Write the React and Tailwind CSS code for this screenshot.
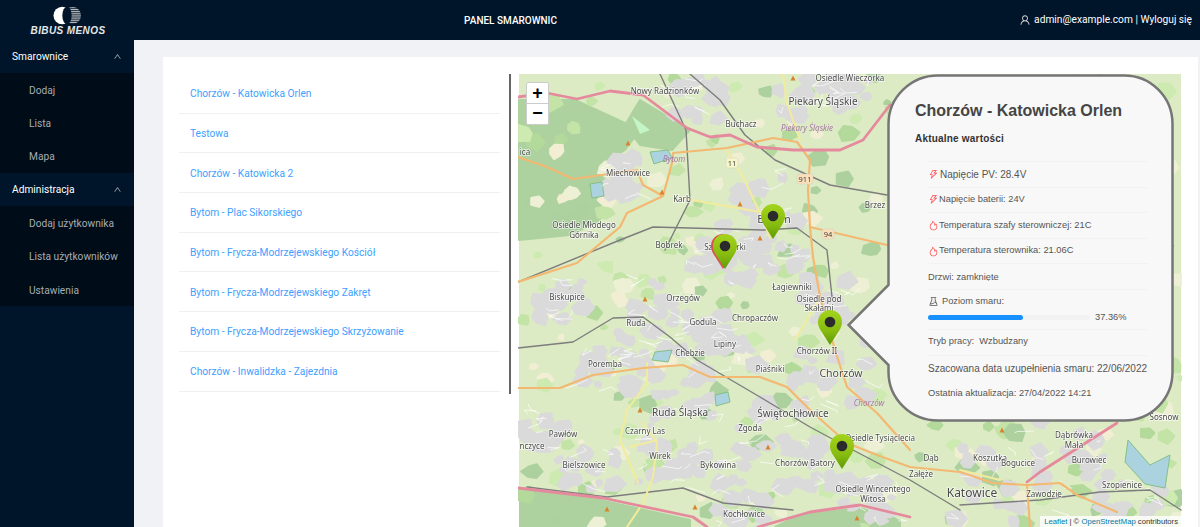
import React from "react";
import {
  AiOutlineUser,
  AiOutlineUp,
  AiOutlineThunderbolt,
  AiOutlineFire,
  AiOutlineExperiment,
} from "react-icons/ai";

const menu = [
  { title: "Smarownice", items: ["Dodaj", "Lista", "Mapa"] },
  { title: "Administracja", items: ["Dodaj użytkownika", "Lista użytkowników", "Ustawienia"] },
];

const stations = [
  "Chorzów - Katowicka Orlen",
  "Testowa",
  "Chorzów - Katowicka 2",
  "Bytom - Plac Sikorskiego",
  "Bytom - Frycza-Modrzejewskiego Kościół",
  "Bytom - Frycza-Modrzejewskiego Zakręt",
  "Bytom - Frycza-Modrzejewskiego Skrzyżowanie",
  "Chorzów - Inwalidzka - Zajezdnia",
];

// deterministic scatter so the map looks the same on every load
let seed = 4711;
const rnd = () => {
  seed = (seed * 16807) % 2147483647;
  return seed / 2147483647;
};

const blob = (cx, cy, r) => {
  const n = 5 + Math.floor(rnd() * 3);
  const pts = [];
  for (let i = 0; i < n; i++) {
    const a = (i / n) * Math.PI * 2;
    const d = r * (0.6 + rnd() * 0.5);
    pts.push(`${(cx + Math.cos(a) * d).toFixed(1)},${(cy + Math.sin(a) * d * 0.8).toFixed(1)}`);
  }
  return pts.join(" ");
};

const towns = [
  [760, 205, 34], [830, 375, 36], [680, 405, 36], [775, 425, 34], [1000, 485, 44], [815, 100, 34],
  [628, 180, 24], [585, 465, 30], [725, 350, 30], [700, 335, 24], [605, 370, 24], [725, 262, 26],
  [660, 300, 26], [560, 300, 22], [660, 460, 24], [720, 470, 28], [815, 470, 30], [870, 500, 24],
  [1070, 450, 34], [1130, 500, 30], [740, 515, 22], [545, 430, 20], [830, 300, 26], [700, 100, 22],
  [850, 90, 20], [780, 250, 24], [640, 350, 24],
];

const greenBlobs = [];
for (let i = 0; i < 300; i++) {
  greenBlobs.push({
    points: blob(519 + rnd() * 662, 74 + rnd() * 453, 3 + rnd() * 10),
    fill: ["#c3e4a6", "#b3d99b", "#cdebb0", "#eef0d5", "#add19e", "#f1eed3"][Math.floor(rnd() * 6)],
  });
}

const grayBlobs = [];
towns.forEach(([x, y, s]) => {
  for (let i = 0; i < 15; i++) {
    grayBlobs.push(blob(x + (rnd() - 0.5) * s * 2.2, y + (rnd() - 0.5) * s * 1.8, 4 + rnd() * 9));
  }
});

const streets = [];
towns.forEach(([x, y, s]) => {
  for (let i = 0; i < 6; i++) {
    const x1 = x + (rnd() - 0.5) * s * 2.4;
    const y1 = y + (rnd() - 0.5) * s * 2;
    const x2 = x1 + (rnd() - 0.5) * 34;
    const y2 = y1 + (rnd() - 0.5) * 16;
    streets.push(`${x1.toFixed(1)},${y1.toFixed(1)} ${x2.toFixed(1)},${y2.toFixed(1)} ${(x2 + (rnd() - 0.5) * 26).toFixed(1)},${(y2 + (rnd() - 0.5) * 10).toFixed(1)}`);
  }
});

const forests = [
  "519,100 575,100 640,130 625,150 600,165 590,185 610,190 600,220 570,235 519,240",
  "640,100 690,130 672,150 640,145 625,125",
  "520,490 600,500 690,520 690,527 520,527",
  "775,527 800,515 860,508 900,520 900,527",
];

const water = [
  "650,152 668,150 672,158 654,164",
  "590,184 602,182 604,196 592,198",
  "1128,440 1150,465 1170,455 1165,488 1145,484 1125,462",
  "715,395 728,392 730,402 716,406",
  "655,352 672,350 668,362 652,360",
];

const motorways = [
  "518,97 547,93 577,99 610,91 643,95 687,128 710,137 730,135 757,147 793,150 840,150 863,140 890,105",
  "518,488 603,498 693,517 707,527",
  "758,527 810,512 860,505 910,517",
  "1117,423 1040,472 1027,482",
];

const mainRoads = [
  "518,388 560,388 593,375 643,368 683,365 710,377 760,377 787,387 810,410 847,443 877,455 910,467 960,472 993,483 1027,485 1060,483 1077,495 1117,512",
  "518,282 577,263 620,227 627,213 663,196 643,185 637,170 573,179 547,167 518,157",
  "663,196 672,163 673,153 727,148 773,138 797,142 810,160 808,190 810,227 813,257 820,297 835,350 847,387 877,413 910,450",
  "810,227 887,245",
  "1027,485 1030,527",
];

const yellowRoads = [
  "727,150 743,177 760,213 770,238",
  "680,198 760,212",
  "783,74 787,103 800,140",
  "647,363 647,383 627,410 620,440 638,483",
  "643,423 657,443 653,477 643,503 627,527",
  "630,447 657,440",
  "820,297 795,340",
  "960,470 1000,480",
];

const rails = [
  "518,282 620,240 653,227 763,230 797,228 827,250 832,297",
  "518,348 573,342 613,318 643,317 670,337 697,360 760,397 810,427 853,450 910,480 960,510",
  "527,487 607,497 683,488 723,503 793,510",
  "960,505 1040,500 1100,492 1150,490 1181,510",
  "690,74 720,100 745,135 775,160 830,185 887,195",
  "660,74 686,130 690,200 665,250",
];

const labels = [
  ["Osiedle Wieczorka", 850, 81, 8],
  ["Nowy Radzionków", 665, 94, 8],
  ["Piekary Śląskie", 823, 105, 10],
  ["Buchacz", 741, 127, 8],
  ["Miechowice", 628, 176, 8],
  ["Karb", 682, 202, 8],
  ["Brzez", 875, 208, 8],
  ["Bytom", 774, 223, 11],
  ["Osiedle Młodego", 584, 228, 8],
  ["Górnika", 584, 238, 8],
  ["Bobrek", 669, 248, 8],
  ["Szombierki", 725, 250, 8],
  ["Łagiewniki", 792, 290, 8],
  ["Biskupice", 567, 300, 8],
  ["Orzegów", 683, 301, 8],
  ["Osiedle pod", 819, 302, 8],
  ["Skałami", 819, 311, 8],
  ["Chropaczów", 755, 321, 8],
  ["Ruda", 636, 326, 8],
  ["Godula", 703, 325, 8],
  ["Lipiny", 725, 347, 8],
  ["Chebzie", 690, 356, 8],
  ["Chorzów II", 817, 354, 8],
  ["Poremba", 605, 367, 8],
  ["Piaśniki", 770, 372, 8],
  ["Chorzów", 841, 377, 10.5],
  ["Ruda Śląska", 680, 416, 10],
  ["Świętochłowice", 793, 417, 10],
  ["Czarny Las", 645, 434, 8],
  ["Zgoda", 750, 431, 8],
  ["Pawłów", 563, 437, 8],
  ["Wirek", 660, 459, 8],
  ["Bielszowice", 584, 468, 8],
  ["Bykowina", 718, 468, 8],
  ["Chorzów Batory", 805, 466, 8],
  ["Osiedle Tysiąclecia", 880, 441, 8],
  ["Osiedle Wincentego", 873, 492, 8],
  ["Witosa", 873, 502, 8],
  ["Kochłowice", 744, 517, 8],
  ["Katowice", 972, 497, 12],
  ["Dąb", 931, 461, 8],
  ["Załęże", 921, 477, 8],
  ["Koszutka", 990, 461, 8],
  ["Bogucice", 1018, 466, 8],
  ["Dąbrówka", 1074, 438, 8],
  ["Mała", 1074, 448, 8],
  ["Burowiec", 1089, 463, 8],
  ["Szopienice", 1122, 488, 8],
  ["Zawodzie", 1044, 497, 8],
  ["Sosnow", 1164, 420, 8],
  ["nczyce", 532, 449, 8],
  ["ica", 525, 155, 8],
];

const districts = [
  ["Piekary Śląskie", 807, 131],
  ["Bytom", 674, 162],
  ["Chorzów", 869, 406],
];

const triangles = [
  [793, 78], [628, 143], [662, 192], [740, 204], [760, 238], [645, 299], [640, 410], [607, 509],
  [695, 507], [768, 447], [857, 518], [1002, 430], [1150, 395],
];

function Polylines({ items, stroke, width, dash, opacity }) {
  return items.map((points) => (
    <polyline
      key={points}
      points={points}
      fill="none"
      stroke={stroke}
      strokeWidth={width}
      strokeDasharray={dash}
      strokeOpacity={opacity}
      strokeLinejoin="round"
      strokeLinecap="round"
    />
  ));
}

function Patch({ points, fill }) {
  return <polygon points={points} fill={fill} stroke={fill} strokeWidth="2" strokeLinejoin="round" />;
}

function Pin({ x, top, color = "url(#pinGreen)" }) {
  return (
    <g transform={`translate(${x - 12} ${top})`}>
      <path d="M12 0C5.2 0 0 5.2 0 12c0 3 1 5.4 2.6 8.2L12 35l9.4-14.8C23 17.4 24 15 24 12 24 5.2 18.8 0 12 0z" fill={color} />
      <circle cx="12" cy="12" r="5.3" fill="#2b2b2b" />
    </g>
  );
}

function MapDrawing() {
  return (
    <svg
      viewBox="519 74 662 453"
      className="absolute inset-0 w-full h-full blur-[0.4px]"
      style={{ fontFamily: "'Noto Sans', sans-serif" }}
    >
      <defs>
        <linearGradient id="pinGreen" x1="0" y1="0" x2="0" y2="1">
          <stop offset="0" stopColor="#a4d41c" />
          <stop offset="0.6" stopColor="#86bb10" />
          <stop offset="1" stopColor="#5f9a05" />
        </linearGradient>
      </defs>
      <rect x="519" y="74" width="662" height="453" fill="#dcebc4" />
      {forests.map((p) => <Patch key={p} points={p} fill="#aed29f" />)}
      {greenBlobs.map((b) => <Patch key={b.points} points={b.points} fill={b.fill} />)}
      {grayBlobs.map((p) => <Patch key={p} points={p} fill="#dadada" />)}
      {water.map((p) => <polygon key={p} points={p} fill="#aad3df" stroke="#86bf86" strokeWidth="1" />)}
      <polygon points="632,116 650,130 640,134" fill="#c4f5c4" />
      <Polylines items={streets} stroke="#ffffff" width={0.8} opacity={0.85} />
      <Polylines items={rails} stroke="#7d7d7d" width={1.4} />
      <Polylines items={yellowRoads} stroke="#f3eb9c" width={2} />
      <Polylines items={mainRoads} stroke="#f3b871" width={2.2} />
      <Polylines items={motorways} stroke="#e58a9d" width={2.8} />
      {triangles.map(([x, y]) => (
        <polygon key={`${x}-${y}`} points={`${x - 2.5},${y + 2.5} ${x + 2.5},${y + 2.5} ${x},${y - 2.5}`} fill="#d9822b" />
      ))}
      {[["11", 732, 163, 12], ["911", 805, 179, 16], ["94", 828, 234, 12]].map(([t, x, y, w]) => (
        <g key={t}>
          <rect x={x - w / 2} y={y - 5} width={w} height="10" rx="2" fill={t === "11" ? "#f7f6c8" : "#fbdfb8"} stroke="#ccc" strokeWidth="0.5" />
          <text x={x} y={y + 2.8} textAnchor="middle" fontSize="7.5" fill="#444">{t}</text>
        </g>
      ))}
      {labels.map(([t, x, y, size]) => (
        <text
          key={t + x}
          x={x}
          y={y}
          textAnchor="middle"
          fontSize={size}
          fill="#4a4a4a"
          stroke="#ffffff"
          strokeOpacity="0.7"
          strokeWidth="1.6"
          paintOrder="stroke"
        >
          {t}
        </text>
      ))}
      {districts.map(([t, x, y]) => (
        <text key={t} x={x} y={y} textAnchor="middle" fontSize="8" fontStyle="italic" fill="#a87ba8">{t}</text>
      ))}
      <Pin x={773} top={204} />
      <Pin x={723} top={234} color="#d9534f" />
      <Pin x={725} top={234} />
      <Pin x={830} top={310} />
      <Pin x={842} top={434} />
    </svg>
  );
}

function Row({ children, className = "" }) {
  return (
    <div className={`flex items-center h-[25.6px] pl-[1px] border-b border-[#f2f2f2] ${className}`}>
      {children}
    </div>
  );
}

function MapPopup() {
  return (
    <div className="absolute left-[329px] top-0 w-[327px] h-[349px] text-[#555] text-[9.3px] font-['Liberation_Sans',Arial,sans-serif]">
      <svg viewBox="0 0 327 349" className="absolute inset-0 w-full h-full">
        <path
          d="M91 1.5H277C304 1.5 325.5 23 325.5 50V298C325.5 325 304 346.5 277 346.5H91C64 346.5 41.5 325 41.5 298V291L1.5 251L41.5 211V50C41.5 23 64 1.5 91 1.5Z"
          fill="#f8f8f8"
          stroke="#767676"
          strokeWidth="2.5"
        />
      </svg>
      <div className="relative pl-[68px] pr-[26px] pt-[27px]">
        <div className="text-[16px] leading-[19px] font-bold text-[#454545]">Chorzów - Katowicka Orlen</div>
        <div className="mt-[11px] text-[10px] leading-[16px] font-bold text-[#333] tracking-[0.2px]">Aktualne wartości</div>
        <div className="ml-[12px] mt-[14px] border-t border-[#f2f2f2]">
          <Row className="text-[10px]"><AiOutlineThunderbolt className="text-[#ff4d4f] text-[11px] mr-[1px]" />Napięcie PV: 28.4V</Row>
          <Row><AiOutlineThunderbolt className="text-[#ff4d4f] text-[11px]" />Napięcie baterii: 24V</Row>
          <Row><AiOutlineFire className="text-[#ff4d4f] text-[11px]" />Temperatura szafy sterowniczej: 21C</Row>
          <Row><AiOutlineFire className="text-[#ff4d4f] text-[11px]" />Temperatura sterownika: 21.06C</Row>
          <Row className="items-start overflow-hidden">
            <span className="block h-[9px] mt-[8px] leading-[11px] overflow-hidden">Drzwi: zamknięte</span>
          </Row>
          <div className="h-[40px] border-b border-[#f2f2f2] pt-[5px] pl-[1px]">
            <div className="flex items-center gap-[3px] h-[14px]">
              <AiOutlineExperiment className="text-[#555] text-[11px]" />
              Poziom smaru:
            </div>
            <div className="flex items-center h-[16px] mt-[1px]">
              <div className="w-[162px] h-[5px] rounded-full bg-[#f2f2f2]">
                <div className="w-[95px] h-[5px] rounded-full bg-[#1890ff]" />
              </div>
              <span className="ml-[5px]">37.36%</span>
            </div>
          </div>
          <Row>Tryb pracy:&nbsp; Wzbudzany</Row>
          <Row className="text-[10px] border-none whitespace-nowrap">Szacowana data uzupełnienia smaru: 22/06/2022</Row>
          <Row className="border-none h-[22px]">Ostatnia aktualizacja: 27/04/2022 14:21</Row>
        </div>
      </div>
    </div>
  );
}

export default function App() {
  return (
    <div className="h-screen flex flex-col overflow-hidden bg-[#f0f2f5] font-['Roboto',sans-serif] text-[10.2px]">
      <header className="h-[40px] shrink-0 bg-[#001529] text-white flex items-center pr-[8px]">
        <div className="w-[134px] flex flex-col items-center pt-[1px] shrink-0">
          <svg viewBox="0 0 30 20" className="w-[28px] h-[19px]">
            <defs>
              <clipPath id="logoRight"><circle cx="21" cy="10" r="9" /></clipPath>
            </defs>
            <circle cx="10" cy="10" r="9.5" fill="#ffffff" />
            <g clipPath="url(#logoRight)">
              {[2, 4, 6, 8, 10, 12, 14, 16, 18].map((y) => (
                <rect key={y} x="10" y={y - 1} width="22" height="1.2" fill="#b5b9bd" />
              ))}
            </g>
            <ellipse cx="15" cy="10" rx="5" ry="9.5" fill="#001529" />
          </svg>
          <span className="font-['Liberation_Sans',sans-serif] italic font-bold text-[10px] leading-[11px] tracking-[0.4px] text-[#e4e6e8] ml-[2px]">
            BIBUS MENOS
          </span>
        </div>
        <div className="flex-1 text-center font-medium text-[10px] pr-[132px]">PANEL SMAROWNIC</div>
        <div className="flex items-center gap-[3px]">
          <AiOutlineUser className="text-[12px] text-[#d9d9d9]" />
          <span>admin@example.com | Wyloguj się</span>
        </div>
      </header>

      <div className="flex flex-1 min-h-0">
        <aside className="w-[134px] shrink-0 bg-[#001529]">
          {menu.map((group) => (
            <div key={group.title}>
              <div className="h-[33.3px] flex items-center justify-between pl-[12px] pr-[12px] text-white">
                <span>{group.title}</span>
                <AiOutlineUp className="text-[9px] text-[#a6adb4]" />
              </div>
              <div className="bg-[#000c17]">
                {group.items.map((item) => (
                  <div key={item} className="h-[33.3px] flex items-center pl-[29px] pt-[1px] text-[#a6adb4]">
                    {item}
                  </div>
                ))}
              </div>
            </div>
          ))}
        </aside>

        <main className="flex-1 min-w-0 pl-[29px] pr-[2px] pt-[17px]">
          <div className="h-full bg-white pl-[16px] pr-[16px] pt-[17px] flex">
            <div className="w-[332px] shrink-0 h-[320px] border-r-[2px] border-[#666] pr-[9px]">
              {stations.map((name) => (
                <div key={name} className="h-[39.7px] flex items-center pl-[11px] pt-[1px] border-b border-[#f0f0f0] text-[#40a0ff]">
                  {name}
                </div>
              ))}
            </div>
            <div className="relative flex-1 ml-[7px] overflow-hidden">
              <MapDrawing />
              <div className="absolute left-[8px] top-[8px] w-[23px] bg-white rounded-[2px] border border-[#ccc] text-black text-center font-['Liberation_Sans',sans-serif] font-bold">
                <div className="h-[21px] leading-[20px] text-[18px] border-b border-[#ccc]">+</div>
                <div className="h-[20px] leading-[19px] text-[18px]">−</div>
              </div>
              <MapPopup />
              <div className="absolute right-0 bottom-0 h-[11px] px-[4px] bg-white/80 text-[7.7px] leading-[11px] text-[#333] font-['Liberation_Sans',sans-serif]">
                <span className="text-[#0078a8]">Leaflet</span> | © <span className="text-[#0078a8]">OpenStreetMap</span> contributors
              </div>
            </div>
          </div>
        </main>
      </div>
    </div>
  );
}
